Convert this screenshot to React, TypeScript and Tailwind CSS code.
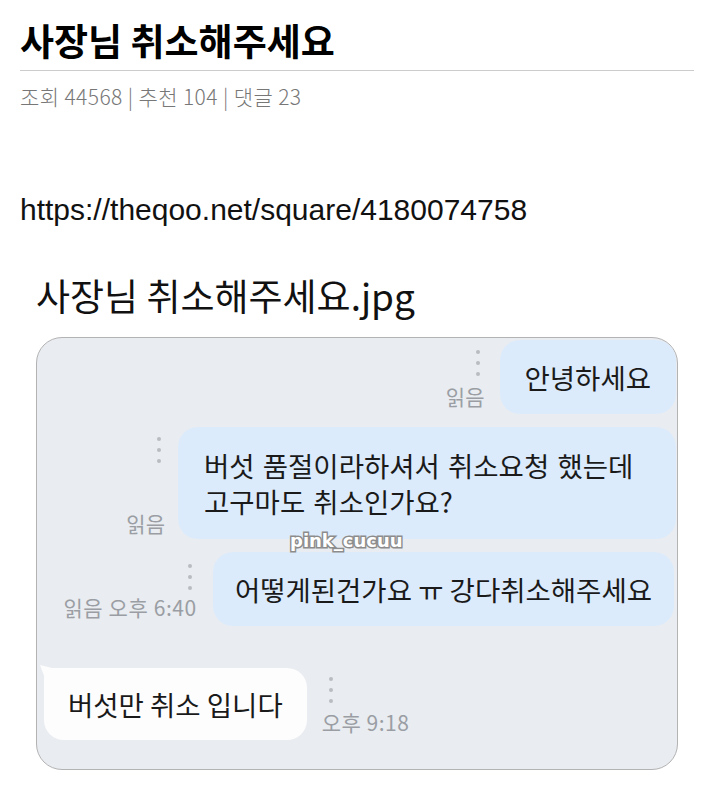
function Dots({ className = '' }: { className?: string }) {
  return (
    <div className={`flex flex-col gap-[7px] ${className}`}>
      <span className="size-[4px] rounded-full bg-[#b9bdc2]" />
      <span className="size-[4px] rounded-full bg-[#b9bdc2]" />
      <span className="size-[4px] rounded-full bg-[#b9bdc2]" />
    </div>
  );
}

const kr = "font-['Noto_Sans_CJK_KR',sans-serif]";

export default function App() {
  return (
    <div className={`min-h-[805px] bg-white px-5 ${kr}`}>
      {/* post header */}
      <h1 className="pt-[19px] text-[37px] font-bold leading-[42px] text-black">
        사장님 취소해주세요
      </h1>
      <div className="mt-[9px] border-t border-[#cccccc]" />
      <p className="mt-[13px] text-[21px] font-light leading-[25px] tracking-[0.4px] text-[#777777]">
        조회 44568 | 추천 104 | 댓글 23
      </p>

      <p className="mt-[83px] font-['Liberation_Sans',sans-serif] text-[30px] leading-[36px] text-[#111111]">
        https://theqoo.net/square/4180074758
      </p>

      {/* captured image */}
      <div className="px-4">
        <p className="mt-[46px] text-[37px] leading-[42px] text-[#111111]">
          사장님 취소해주세요.jpg
        </p>

        <div className="relative mt-[21px] h-[433px] overflow-hidden rounded-[26px] border border-[#b3b3b3] bg-[#e9ecf0] pt-[2px] pr-[1px] pl-[7px] text-[27.5px] leading-[36px] text-[#1a1a1a]">
          <div className="flex flex-col">
            {/* row 1 */}
            <div className="flex items-stretch justify-end gap-[15px]">
              <div className="flex flex-col items-end justify-between pt-[10px] pb-[7px]">
                <Dots className="mr-[5px]" />
                <span className="text-[21px] leading-none text-[#9a9ea4]">읽음</span>
              </div>
              <div className="rounded-[20px] bg-[#dcebfb] px-[25px] py-[19px]">안녕하세요</div>
            </div>

            {/* row 2 */}
            <div className="mt-[13px] flex items-stretch justify-end gap-[13px]">
              <div className="flex flex-col items-end justify-between pt-[10px] pb-[5px]">
                <Dots className="mr-[4px]" />
                <span className="text-[21px] leading-none text-[#9a9ea4]">읽음</span>
              </div>
              <div className="w-[498px] rounded-[20px] bg-[#dcebfb] px-[26px] py-[20px] [word-spacing:2px]">
                버섯 품절이라하셔서 취소요청 했는데
                <br />
                고구마도 취소인가요?
              </div>
            </div>

            {/* row 3 */}
            <div className="mt-[13px] mr-[2px] flex items-stretch justify-end gap-[16px]">
              <div className="flex flex-col items-end justify-between pt-[12px] pb-[8px]">
                <Dots className="mr-[5px]" />
                <span className="text-[21px] leading-none tracking-[0.6px] text-[#9a9ea4]">
                  읽음 오후 6:40
                </span>
              </div>
              <div className="rounded-[20px] bg-[#dcebfb] px-[22px] py-[19px]">
                어떻게된건가요 ㅠ 강다취소해주세요
              </div>
            </div>

            {/* row 4 */}
            <div className="mt-[42px] flex items-stretch justify-start gap-[15px]">
              <div className="relative rounded-[20px] rounded-tl-[10px] bg-[#fdfdfd] px-[24px] py-[18px]">
                <svg
                  className="absolute -top-[3px] -left-[4px]"
                  width="16"
                  height="16"
                  viewBox="0 0 16 16"
                >
                  <path d="M0 0 L16 4 L6 16 Z" fill="#fdfdfd" />
                </svg>
                버섯만 취소 입니다
              </div>
              <div className="flex flex-col items-start justify-between pt-[9px] pb-[7px]">
                <Dots className="ml-[7px]" />
                <span className="text-[21px] leading-none tracking-[0.5px] text-[#9a9ea4]">
                  오후 9:18
                </span>
              </div>
            </div>
          </div>

          {/* watermark */}
          <span className="absolute top-[194px] left-[253px] font-['DejaVu_Sans',sans-serif] text-[18px] leading-none font-bold text-white [-webkit-text-stroke:3px_#8c8c8c] [paint-order:stroke_fill]">
            pink_cucuu
          </span>
        </div>
      </div>
    </div>
  );
}
